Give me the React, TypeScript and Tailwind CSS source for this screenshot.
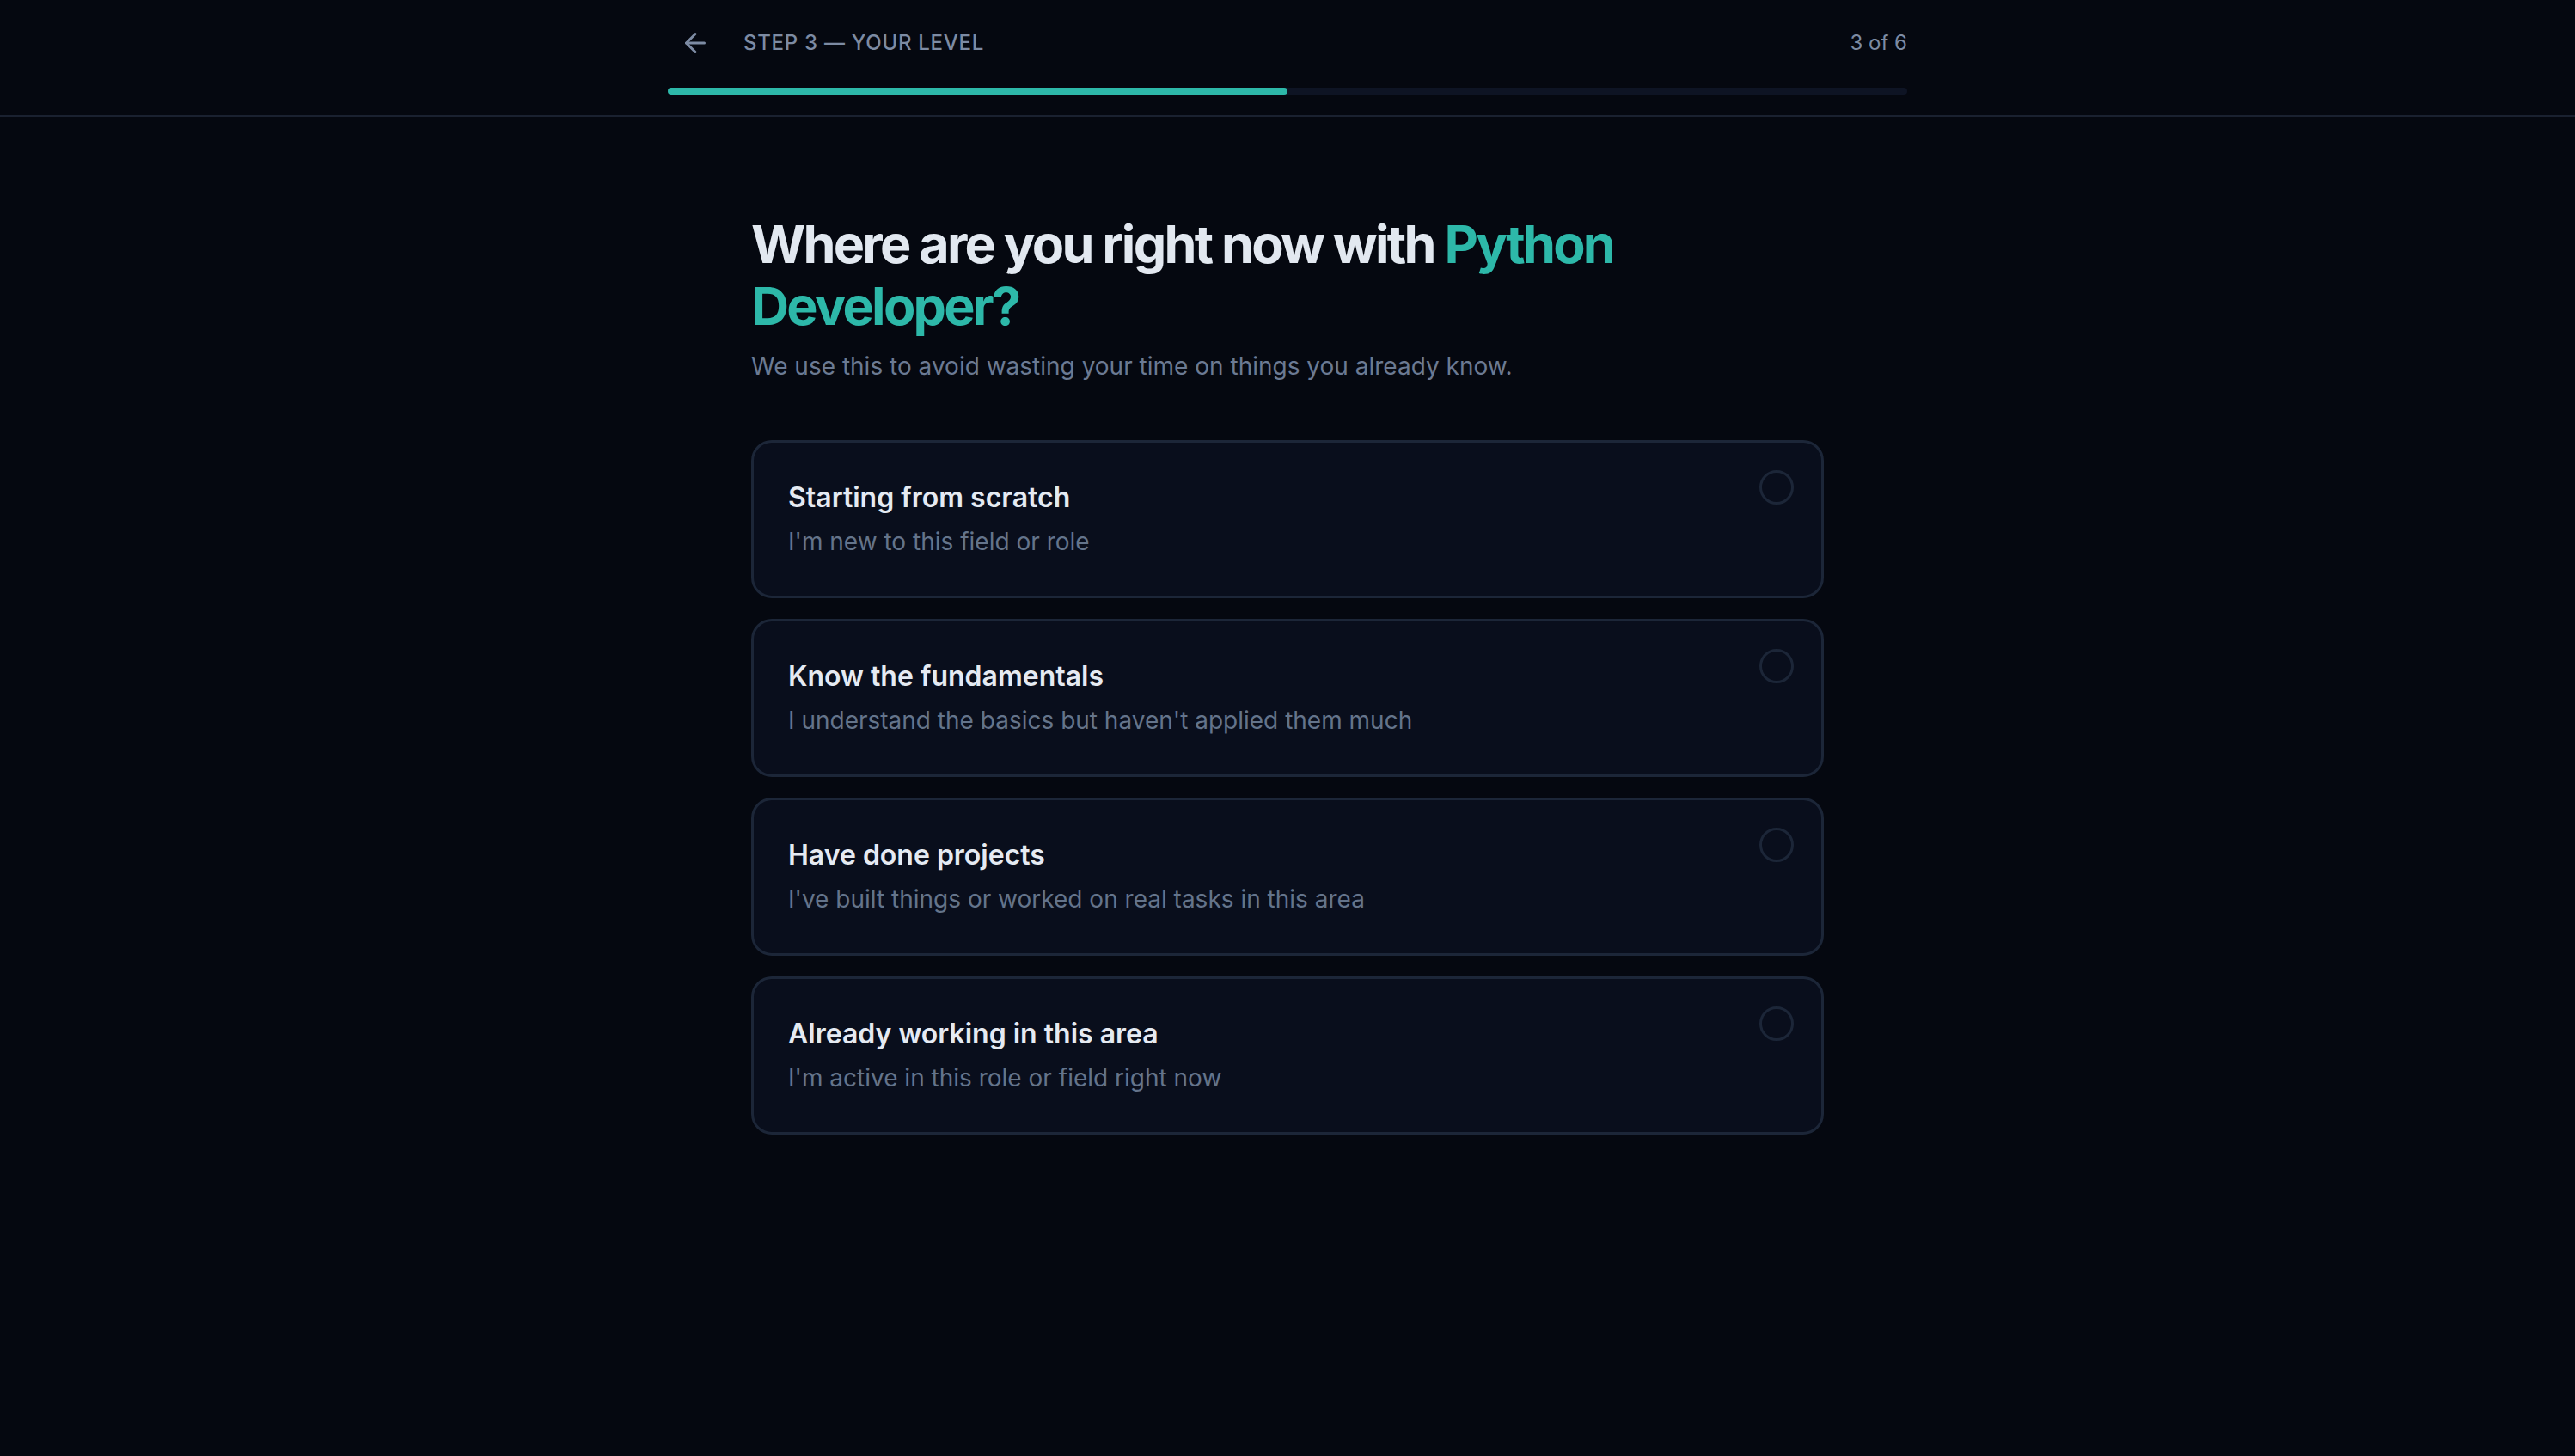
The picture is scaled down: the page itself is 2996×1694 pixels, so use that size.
import { ArrowLeft } from 'lucide-react';

const levels = [
  { title: 'Starting from scratch', desc: "I'm new to this field or role" },
  { title: 'Know the fundamentals', desc: "I understand the basics but haven't applied them much" },
  { title: 'Have done projects', desc: "I've built things or worked on real tasks in this area" },
  { title: 'Already working in this area', desc: "I'm active in this role or field right now" },
];

const LevelCard: React.FC<{ title: string; desc: string }> = ({ title, desc }) => {
  return (
    <button className="flex w-full items-start justify-between rounded-[24px] border-[3px] border-[#1c2638] bg-[#090e1c] pt-8 pr-8 pb-[43px] pl-10 text-left">
      <div className="mt-3 flex flex-col">
        <span className="text-[32px] leading-[40px] font-semibold text-[#e5eaf2]">{title}</span>
        <span className="mt-[11px] text-[28px] leading-[40px] text-[#64748b]">{desc}</span>
      </div>
      <span className="h-10 w-10 shrink-0 rounded-full border-[3px] border-[#1c2638]" />
    </button>
  );
};

const App: React.FC = () => {
  return (
    <div className="min-h-screen bg-[#050810] font-['Inter','Noto_Sans',sans-serif]">
      <header className="border-b-2 border-[#1a2130]">
        <div className="mx-auto w-[1442px] pt-8 pb-6">
          <div className="flex h-9 items-center justify-between">
            <div className="flex items-center gap-6">
              <span className="flex w-16 justify-center text-[#7d8ba3]">
                <ArrowLeft size={36} strokeWidth={2} />
              </span>
              <span className="text-[24px] font-medium tracking-[0.03em] text-[#7d8ba3] uppercase">
                Step 3 — Your level
              </span>
            </div>
            <span className="text-[24px] text-[#7d8ba3]">3 of 6</span>
          </div>
          <div className="mt-[34px] h-2 w-full rounded-full bg-[#0e1424]">
            <div className="h-2 w-1/2 rounded-full bg-[#2db8a9]" />
          </div>
        </div>
      </header>

      <main className="mx-auto w-[1248px] pt-[112px] pb-20">
        <h1 className="text-[61px] leading-[72px] font-bold tracking-[-0.045em] text-[#e2e8f0]">
          Where are you right now with <span className="text-[#2db8a9]">Python</span>{' '}
          <span className="text-[#2db8a9]">Developer?</span>
        </h1>
        <p className="mt-[14px] text-[28px] leading-[40px] text-[#6b7a93]">
          We use this to avoid wasting your time on things you already know.
        </p>
        <div className="mt-[66px] flex flex-col gap-6">
          {levels.map((l) => (
            <LevelCard key={l.title} title={l.title} desc={l.desc} />
          ))}
        </div>
      </main>
    </div>
  );
};

export default App;
